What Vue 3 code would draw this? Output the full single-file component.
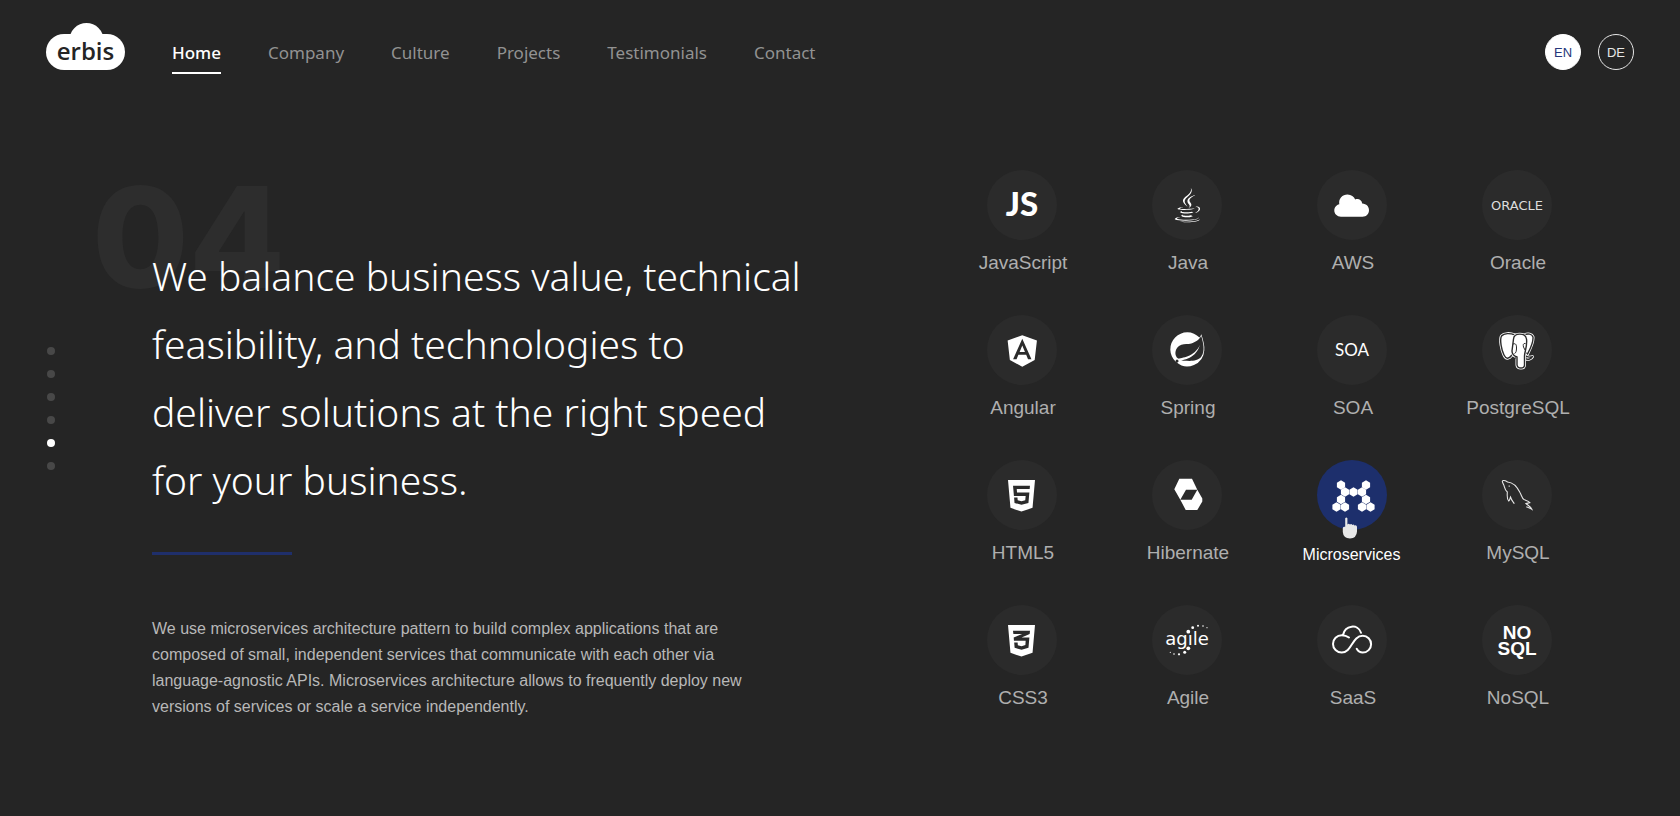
<script setup>
import {ref} from "vue";

const links = ["Home", "Company", "Culture", "Projects", "Testimonials", "Contact"];
const languages = ["EN", "DE"];

const activeLink = ref("Home");
const activeLanguage = ref("EN");
const activeSlide = ref(5);
const activeTech = ref("Microservices");

// hexagon centers of the microservices mark
const hexes = [
  [24, 25], [49, 25], [28, 32], [36.5, 32], [45, 32], [24, 39.5], [49, 39.5],
  [19.5, 47], [28, 47], [45, 47], [53.5, 47]
].map(([x, y]) => `<path d="M${x} ${y - 4.7}l4.1 2.35v4.7l-4.1 2.35-4.1-2.35v-4.7z"/>`).join("");

const ear = "M33 20C28 18 22 18 19.5 21C17.5 25 19.5 35 22 40C24 44 26.5 44.5 29.5 40.5L33 36Z";
const rightEar = "M42 20C46 18 50 19 51 22C51.5 28 48 34 45.5 39L42 36Z";
const head = "M31.5 24C32 17.5 43.5 17.5 44.5 24C45.5 31 42.5 37 42.5 41V50C42.5 54 35.5 54 35 50V42C32 41 30 40 30 36Z";

// all icons are drawn on the 70x70 circle
const techs = [
  {name: "JavaScript", icon: `<text x="35" y="46" text-anchor="middle" font-family="Lato, sans-serif" font-weight="900" font-size="33">JS</text>`},
  {name: "Java", icon: `<path transform="translate(22.6 18) scale(.067)" d="M277.74 312.9c9.8-6.7 23.4-12.5 23.4-12.5s-38.7 7-77.2 10.2c-47.1 3.9-97.7 4.7-123.1 1.3-60.1-8 33-30.1 33-30.1s-36.1-2.4-80.6 19c-52.5 25.4 130 37 224.5 12.1zm-85.4-32.1c-19-42.7-83.1-80.2 0-145.8C296 53.2 242.84 0 242.84 0c21.5 84.5-75.6 110.1-110.7 162.6-23.9 35.9 11.7 74.4 60.2 118.2zm114.6-176.2c.1 0-175.2 43.8-91.5 140.2 24.7 28.4-6.5 54-6.5 54s62.7-32.4 33.9-72.9c-26.9-37.8-47.5-56.6 64.1-121.3zm-6.1 270.5a12.19 12.19 0 0 1-2 2.6c128.3-33.7 81.1-118.9 19.8-97.3a17.33 17.33 0 0 0-8.2 6.3 70.45 70.45 0 0 1 11-3c31-6.5 75.5 41.5-20.6 91.4zM348 437.4s14.5 11.9-15.9 21.2c-57.9 17.5-240.8 22.8-291.6.7-18.3-7.9 16-19 26.8-21.3 11.2-2.4 17.7-2 17.7-2-20.3-14.3-131.3 28.1-56.4 40.2C232.84 509.4 401 461.3 348 437.4zM124.44 396c-78.7 22 47.9 67.4 148.1 24.5a185.89 185.89 0 0 1-28.2-13.8c-44.7 8.5-65.4 9.1-106 4.5-33.5-3.8-13.9-15.2-13.9-15.2zm179.8 97.2c-78.7 14.8-175.8 13.1-233.3 3.6 0-.1 11.8 9.7 72.4 13.6 92.2 5.9 233.8-3.3 237.1-46.9 0 0-6.4 16.5-76.2 29.7zM260.64 353c-59.2 11.4-93.5 11.1-136.8 6.6-33.5-3.5-11.6-19.7-11.6-19.7-86.8 28.8 48.2 61.4 169.5 25.9a60.37 60.37 0 0 1-21.1-12.8z"/>`},
  {name: "AWS", icon: `<path d="M24 46.7C20 46.7 17.3 43.8 17.3 40.5C17.3 37.3 19.5 34.8 22.3 34.2C21.3 28.5 25.5 24.4 30.5 24.4C34.3 24.4 37 26.6 38.2 29.6C41 28.2 44.8 29.8 45.2 33.6C49.5 33.8 52 36.8 52 40.2C52 43.8 49.3 46.7 45.5 46.7Z"/>`},
  {name: "Oracle", icon: `<text x="35" y="40" text-anchor="middle" font-family="DejaVu Sans, sans-serif" font-size="13" fill="#ddd">ORACLE</text>`},
  {name: "Angular", icon: `<path transform="translate(19.5 18) scale(.0705)" d="M185.7 268.1h76.2l-38.1-91.6-38.1 91.6zM223.8 32L16 106.4l31.8 275.7 176 97.9 176-97.9 31.8-275.7zM354 373.8h-48.6l-26.2-65.4H168.6l-26.2 65.4H93.7L223.8 81.5z"/>`},
  {name: "Spring", icon: `<path transform="translate(18.3 17.3) scale(1.42)" d="M21.8537 1.4158a10.4504 10.4504 0 0 1-1.284 2.2471A11.9666 11.9666 0 1 0 3.8518 20.7757l.4445.3951a11.9543 11.9543 0 0 0 19.6316-8.2971c.3457-3.0126-.568-6.8649-2.0742-11.458zM5.5805 20.8745a1.0174 1.0174 0 1 1-.1482-1.4323 1.0396 1.0396 0 0 1 .1482 1.4323zm16.1991-3.5806c-2.9385 3.9263-9.2601 2.5928-13.2852 2.7904 0 0-.7161.0494-1.4323.1481 0 0 .2717-.1234.6174-.2469 2.8398-.9877 4.1732-1.1853 5.9018-2.0743 3.2349-1.6545 6.4698-5.2844 7.1118-9.0379-1.2347 3.6053-4.9881 6.7167-8.3959 7.9761-2.3459.8643-6.5685 1.7039-6.5685 1.7039l-.1729-.0988c-2.8645-1.4076-2.9632-7.6304 2.2718-9.6306 2.2966-.889 4.4696-.395 6.9637-.9877 2.6422-.6174 5.7043-2.5928 6.939-5.1857 1.3828 4.1732 3.062 10.643.0493 14.6434z"/>`},
  {name: "SOA", icon: `<text x="35" y="41" text-anchor="middle" font-family="Lato, sans-serif" font-size="17">SOA</text>`},
  {name: "PostgreSQL", icon: [ear, rightEar, "M44 41C46.5 42.5 49 42.2 50.5 41.6C49.5 44 46 45 43.5 43.6Z", head].map(d =>
      `<path d="${d}" stroke="#fff" stroke-width="3" stroke-linejoin="round"/><path d="${d}" stroke="#2b2b2b" stroke-width="1.4"/>`
    ).join("") + `<path d="M31 29C34 28 34.5 30 34.5 33C34.5 36 34 38 32.5 38.5M43.5 28.5C41 28 41 30 41.5 32L43 35M27.5 44.5C29.5 45 32 44.5 34 42.5" fill="none" stroke="#2b2b2b"/>`},
  {name: "HTML5", icon: `<path transform="translate(21 17.8) scale(.0703)" d="M0 32l34.9 395.8L191.5 480l157.6-52.2L384 32H0zm308.2 127.9H124.4l4.1 49.4h175.6l-13.6 148.4-97.9 27v.3h-1.1l-98.7-27.3-6-75.8h47.7L138 320l53.5 14.5 53.7-14.5 6-62.2H84.3L71.5 112.2h241.1l-4.4 47.7z"/>`},
  {name: "Hibernate", icon: `<path d="M27.3 18.7H40L45.3 29.7H34L28.3 39.7L22.3 29.3ZM45.3 29.7L50.3 38.5V41.5L45.3 50H33.7L28.3 39.7H39.7Z"/>`},
  {name: "Microservices", icon: hexes},
  {name: "MySQL", icon: `<path d="M32.3 43.7C31 41.5 29.5 40.5 28.5 37C27.8 38.5 28 40 26.7 41C24.5 38.5 25.3 35.5 25.3 32C22.5 29.5 22.5 26.5 21.8 25C20.5 22.5 19.6 20.8 21.3 20.5C23 20.2 24.3 21.2 25.5 22C32 22.5 36 28.5 38 32.5C39.8 35.8 40 38.5 42 39.6C44.5 40.6 46.5 41 47.8 42.6L44 43.6C46 45.4 48.5 46.5 49.8 49.3C47.5 47.8 46 47.5 44.3 46.8M27.2 25.6V26.8" fill="none" stroke="#e6e6e6" stroke-width="1.1"/>`},
  {name: "CSS3", icon: `<path transform="translate(21 17.8) scale(.0703)" d="M0 32l34.9 395.8L192 480l157.1-52.2L384 32H0zm313.1 80l-4.8 47.3L193 208.6l-.3.1h111.5l-12.8 146.6-98.2 28.7-98.8-29.2-6.4-73.9h48.9l3.2 38.3 52.6 13.3 54.7-15.4 3.7-61.6-166.3-.5v-.1l-.2.1-3.6-46.3L193.1 162l6.5-2.7H76.7L70.9 112h242.2z"/>`},
  {name: "Agile", icon: `<text x="35" y="40" text-anchor="middle" font-family="DejaVu Sans, sans-serif" font-size="18">agıle</text>` +
      [[36.3, 26.7, 1.9], [40.7, 22.7, 1.4], [46, 20.7, 1], [51, 21, .8], [55, 22.7, .6], [36.3, 43.3, 1.9], [32.7, 47.3, 1.5], [27, 49.3, 1.1], [22, 49, .8], [18.3, 47.3, .6]]
        .map(([x, y, r]) => `<circle cx="${x}" cy="${y}" r="${r}"/>`).join("")},
  {name: "SaaS", icon: `<path d="M32 32.5C30 31 27.5 30.2 24.7 30.2A8.7 8.7 0 0 0 24.7 47.6C35 47.6 35 30.8 45.7 30.8A8.4 8.4 0 0 1 45.7 47.6C43 47.6 41 46 39.7 43.8M26 30C28 20 41 18.5 44 27.8" fill="none" stroke="#fff" stroke-width="2" stroke-linecap="round"/>`},
  {name: "NoSQL", icon: `<g font-family="Liberation Sans, Arial, sans-serif" font-weight="700" font-size="19" text-anchor="middle"><text x="35" y="34">NO</text><text x="35" y="50">SQL</text></g>`}
];
</script>

<template>
  <header class="header">
    <a class="logo" href="#" aria-label="erbis">
      <svg width="79" height="47" viewBox="0 0 79 47">
        <rect y="11" width="79" height="36" rx="18" fill="#fff"/>
        <circle cx="40.5" cy="17" r="17" fill="#fff"/>
        <text x="39.5" y="37" text-anchor="middle" font-family="Open Sans, sans-serif" font-weight="600" font-size="24" fill="#252525">erbis</text>
      </svg>
    </a>
    <nav class="menu">
      <a v-for="link in links" :key="link" href="#" :class="{active: link === activeLink}" @click.prevent="activeLink = link">{{link}}</a>
    </nav>
    <div class="languages">
      <button v-for="lang in languages" :key="lang" type="button" :class="{active: lang === activeLanguage}" @click="activeLanguage = lang">{{lang}}</button>
    </div>
  </header>

  <main class="content">
    <div class="dots">
      <button v-for="n in 6" :key="n" type="button" :aria-label="'Slide ' + n" :class="{active: n === activeSlide}" @click="activeSlide = n"></button>
    </div>

    <section class="intro">
      <span class="number">04</span>
      <h1>We balance business value, technical<br>feasibility, and technologies to<br>deliver solutions at the right speed<br>for your business.</h1>
      <hr>
      <p>We use microservices architecture pattern to build complex applications that are<br>composed of small, independent services that communicate with each other via<br>language-agnostic APIs. Microservices architecture allows to frequently deploy new<br>versions of services or scale a service independently.</p>
    </section>

    <ul class="techs">
      <li v-for="tech in techs" :key="tech.name" :class="{active: tech.name === activeTech}">
        <div class="circle">
          <svg width="70" height="70" viewBox="0 0 70 70" fill="#fff" v-html="tech.icon"></svg>
          <svg v-if="tech.name === activeTech" class="pointer" width="16" height="22" viewBox="0 0 16 22">
            <path d="M3.2 1.3Q4.4 -.2 5.4 1.3V7.4Q6.8 6 7.9 7.5Q9.4 6.3 10.3 7.9Q11.7 7 12.4 8.6Q14.6 7.6 15 9.8V14.5Q14.6 21.3 8 21.5Q1.3 21.3 .8 15V11.2Q1 9.5 3.2 9.8Z" fill="#e8e8e8"/>
          </svg>
        </div>
        <span>{{tech.name}}</span>
      </li>
    </ul>
  </main>
</template>

<style>
body {
  background: #252525;
}
</style>

<style scoped>
.header,
.content {
  font-family: "Liberation Sans", Arial, sans-serif;
}

.header {
  display: flex;
  align-items: flex-start;
  padding: 23px 46px 0;
}

.logo svg {
  display: block;
}

.menu {
  display: flex;
  gap: 47px;
  margin: 13px 0 0 47px;
}

.menu a {
  height: 36px;
  line-height: 34px;
  font-family: "Noto Sans", "Open Sans", sans-serif;
  font-size: 17px;
  color: #929292;
  text-decoration: none;
  border-bottom: 2px solid transparent;
}

.menu a.active {
  font-weight: 500;
  color: #ffffff;
  border-color: #ffffff;
}

.languages {
  display: flex;
  gap: 17px;
  margin: 11px 0 0 auto;
}

.languages button {
  width: 36px;
  height: 36px;
  padding: 0;
  font-family: inherit;
  font-size: 13px;
  color: #e6e6e6;
  background: none;
  border: 1px solid #e6e6e6;
  border-radius: 50%;
}

.languages button.active {
  color: #26367b;
  background: #ffffff;
  border-color: #ffffff;
}

.content {
  display: flex;
  align-items: flex-start;
  padding: 96px 81px 50px 47px;
}

.dots {
  display: flex;
  flex-direction: column;
  gap: 15px;
  margin-top: 177px;
}

.dots button {
  width: 8px;
  height: 8px;
  padding: 0;
  background: #484848;
  border: none;
  border-radius: 50%;
}

.dots button.active {
  background: #ffffff;
}

.intro {
  position: relative;
  flex: 1;
  margin: 72px 0 0 97px;
}

.number {
  position: absolute;
  top: -85px;
  left: -60px;
  line-height: 160px;
  font-family: Inter, sans-serif;
  font-size: 140px;
  font-weight: 800;
  color: #2d2d2d;
}

h1 {
  position: relative;
  margin: 0;
  line-height: 68px;
  font-family: "Noto Sans", "Open Sans", sans-serif;
  font-size: 39px;
  font-weight: 300;
  color: #ffffff;
  white-space: nowrap;
}

hr {
  width: 140px;
  height: 3px;
  margin: 38px 0 61px;
  background: #1f2f6b;
  border: none;
}

p {
  margin: 0;
  line-height: 26px;
  font-size: 16px;
  color: #b8b8b8;
  white-space: nowrap;
}

.techs {
  display: grid;
  grid-template-columns: repeat(4, 165px);
  grid-auto-rows: 104px;
  row-gap: 41px;
  margin: 0;
  padding: 0;
  list-style: none;
}

.techs li {
  display: flex;
  flex-direction: column;
  align-items: center;
  gap: 12px;
}

.circle {
  position: relative;
  width: 70px;
  height: 70px;
  background: #2b2b2b;
  border-radius: 50%;
}

.circle svg {
  display: block;
}

.techs .active .circle {
  background: #1d2f6c;
}

.circle .pointer {
  position: absolute;
  top: 57px;
  left: 25px;
}

.techs span {
  padding-left: 3px;
  line-height: 22px;
  font-size: 19px;
  color: #afafaf;
}

.techs .active span {
  padding: 0;
  line-height: 26px;
  font-size: 16px;
  color: #ffffff;
}
</style>
